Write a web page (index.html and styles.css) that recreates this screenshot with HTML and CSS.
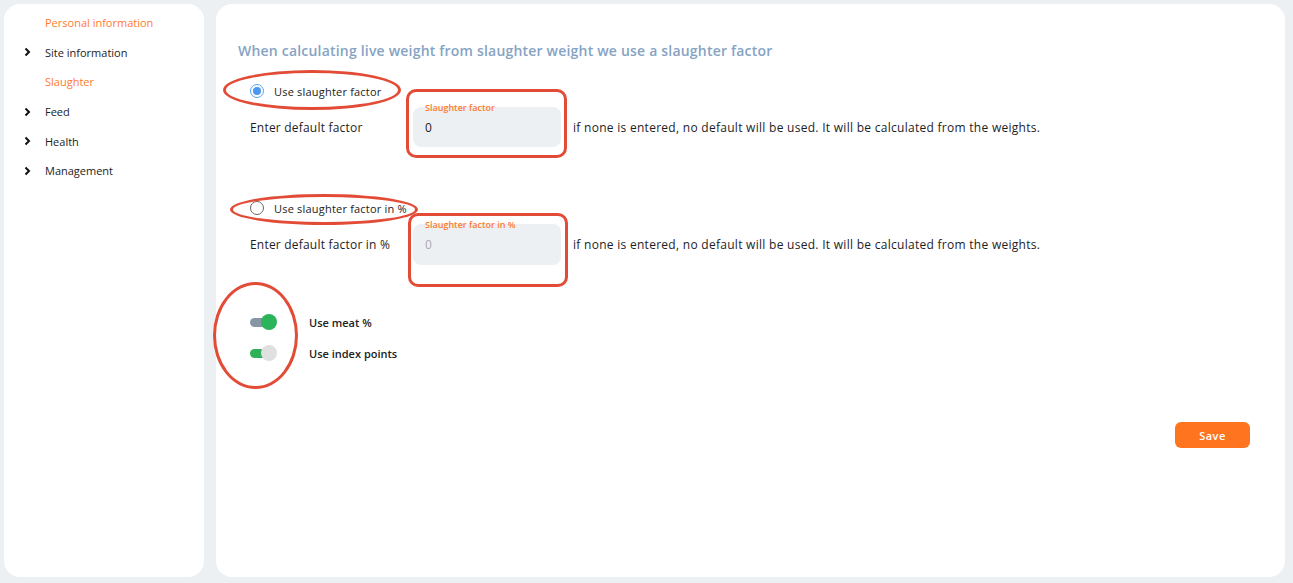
FILE: index.html
```html
<!DOCTYPE html>
<html>
<head>
<meta charset="utf-8">
<link rel="stylesheet" href="styles.css">
</head>
<body>
<aside class="sidebar">
  <div class="nav-item active"><span class="chev"></span>Personal information</div>
  <div class="nav-item"><span class="chev"><svg width="7" height="10" viewBox="0 0 7 10"><path d="M1.5 1.5 L5 5 L1.5 8.5" fill="none" stroke="#111" stroke-width="2"/></svg></span>Site information</div>
  <div class="nav-item active"><span class="chev"></span>Slaughter</div>
  <div class="nav-item"><span class="chev"><svg width="7" height="10" viewBox="0 0 7 10"><path d="M1.5 1.5 L5 5 L1.5 8.5" fill="none" stroke="#111" stroke-width="2"/></svg></span>Feed</div>
  <div class="nav-item"><span class="chev"><svg width="7" height="10" viewBox="0 0 7 10"><path d="M1.5 1.5 L5 5 L1.5 8.5" fill="none" stroke="#111" stroke-width="2"/></svg></span>Health</div>
  <div class="nav-item"><span class="chev"><svg width="7" height="10" viewBox="0 0 7 10"><path d="M1.5 1.5 L5 5 L1.5 8.5" fill="none" stroke="#111" stroke-width="2"/></svg></span>Management</div>
</aside>
<main class="main">
  <h1 class="heading">When calculating live weight from slaughter weight we use a slaughter factor</h1>

  <div class="radio-row first">
    <span class="radio checked"></span>
    <span class="radio-label">Use slaughter factor</span>
  </div>
  <div class="field-row">
    <span class="field-label">Enter default factor</span>
    <div class="input-box">
      <span class="input-label">Slaughter factor</span>
      <span class="input-value">0</span>
    </div>
    <span class="hint">if none is entered, no default will be used. It will be calculated from the weights.</span>
  </div>

  <div class="radio-row second">
    <span class="radio"></span>
    <span class="radio-label">Use slaughter factor in %</span>
  </div>
  <div class="field-row">
    <span class="field-label">Enter default factor in %</span>
    <div class="input-box tall">
      <span class="input-label">Slaughter factor in %</span>
      <span class="input-value muted">0</span>
    </div>
    <span class="hint">if none is entered, no default will be used. It will be calculated from the weights.</span>
  </div>

  <div class="toggle-row first">
    <span class="toggle off-track"><span class="knob green"></span></span>
    <span class="toggle-label">Use meat %</span>
  </div>
  <div class="toggle-row">
    <span class="toggle on-track"><span class="knob grey"></span></span>
    <span class="toggle-label">Use index points</span>
  </div>

  <button class="save">Save</button>

  <span class="mark ellipse e1"></span>
  <span class="mark rect r1"></span>
  <span class="mark ellipse e2"></span>
  <span class="mark rect r2"></span>
  <span class="mark ellipse e3"></span>
</main>
</body>
</html>
```
FILE: styles.css
```css
* { box-sizing: border-box; }
html, body { margin: 0; height: 100%; }
body {
  background: #edf0f3;
  display: flex;
  gap: 12px;
  padding: 4px 8px 6px 4px;
  font-family: "Open Sans", "Liberation Sans", sans-serif;
  color: #1d1d1f;
}
.sidebar {
  width: 200px;
  background: #fff;
  border-radius: 16px;
  padding-top: 4px;
}
.nav-item {
  height: 29.6px;
  display: flex;
  align-items: center;
  font-size: 11px;
  color: #222;
  padding-left: 20px;
}
.nav-item.active { color: #ff7a2f; }
.chev {
  width: 21px;
  display: flex;
  align-items: center;
}
.main {
  flex: 1;
  background: #fff;
  border-radius: 16px;
  position: relative;
  display: flex;
  flex-direction: column;
  padding: 37px 35px 0 22px;
}
.heading {
  margin: 0;
  font-size: 14px;
  line-height: 20px;
  font-weight: 600;
  letter-spacing: 0.2px;
  color: #86a3c3;
}
.radio-row {
  height: 20px;
  display: flex;
  align-items: center;
  padding-left: 12px;
}
.radio-row.first { margin-top: 20px; }
.radio-row.second { margin-top: 51px; }
.radio {
  width: 14px;
  height: 14px;
  border-radius: 50%;
  border: 1.5px solid #666;
  display: flex;
  align-items: center;
  justify-content: center;
  margin-right: 10px;
}
.radio.checked { border-color: #5aa3f0; }
.radio.checked::after {
  content: "";
  width: 8px;
  height: 8px;
  border-radius: 50%;
  background: #4a97ef;
}
.radio-label { font-size: 11px; color: #222; letter-spacing: 0.2px; }
.field-row {
  display: flex;
  align-items: center;
  margin-top: 6px;
  padding-left: 12px;
}
.field-label { width: 163px; font-size: 12px; color: #1d1d1f; letter-spacing: 0.2px; }
.input-box {
  width: 148px;
  height: 40px;
  background: #edf0f3;
  border-radius: 8px;
  position: relative;
  display: flex;
  align-items: center;
  padding-left: 12px;
}
.input-box.tall { height: 41px; }
.input-label {
  position: absolute;
  top: -6px;
  left: 12px;
  font-size: 9px;
  font-weight: 600;
  color: #ff7a2f;
}
.input-value { font-size: 12px; color: #222; }
.input-value.muted { color: #aaa; }
.hint { margin-left: 12px; font-size: 12px; color: #1d1d1f; letter-spacing: 0.28px; }
.toggle-row {
  height: 16px;
  display: flex;
  align-items: center;
  padding-left: 12px;
  margin-top: 15px;
}
.toggle-row.first { margin-top: 49px; }
.toggle {
  width: 26px;
  height: 9px;
  border-radius: 5px;
  position: relative;
  margin-right: 33px;
}
.off-track { background: #8696a6; }
.on-track { background: #31b05a; }
.knob {
  position: absolute;
  right: -1px;
  top: -3.5px;
  width: 16px;
  height: 16px;
  border-radius: 50%;
}
.knob.green { background: #2bb45a; }
.knob.grey { background: #e0e0e0; }
.toggle-label { font-size: 11px; font-weight: 600; color: #222; }
.save {
  align-self: flex-end;
  margin-top: 61px;
  width: 75px;
  height: 26px;
  border: none;
  border-radius: 6px;
  background: #ff741f;
  color: #fff;
  font-family: inherit;
  font-size: 11px;
  font-weight: 600;
  letter-spacing: 0.5px;
}
.mark {
  position: absolute;
  border: 3px solid #e24c37;
  pointer-events: none;
}
.ellipse { border-radius: 50%; }
.rect { border-radius: 10px; }
.e1 { left: 7px; top: 66px; width: 178px; height: 40px; }
.r1 { left: 190px; top: 85px; width: 161px; height: 69px; }
.e2 { left: 14px; top: 190px; width: 188px; height: 31px; }
.r2 { left: 192px; top: 209px; width: 160px; height: 74px; }
.e3 { left: -3px; top: 278px; width: 85px; height: 107px; }
```
